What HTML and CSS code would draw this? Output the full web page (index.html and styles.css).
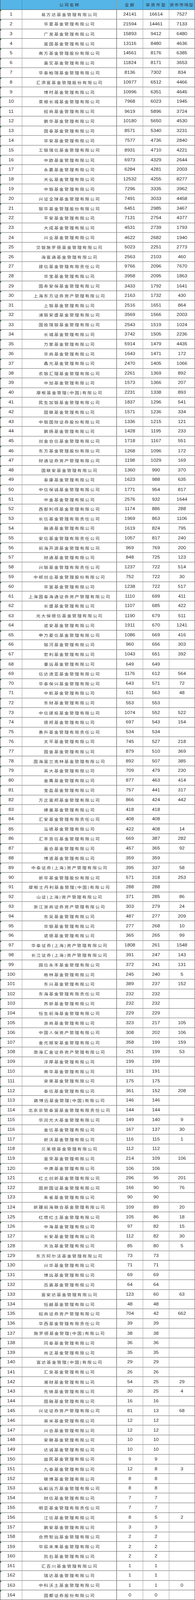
FILE: index.html
```html
<!DOCTYPE html>
<html lang="zh-CN">
<head>
<meta charset="utf-8">
<title>基金公司产品数量</title>
<link rel="stylesheet" href="styles.css">
</head>
<body>
<div class="frame">
<div class="sheet">
<div class="row head"><span class="no"></span><span class="name">公司名称</span><span class="n hd">全部</span><span class="n hd">非货币型</span><span class="n hd last">货币市场型</span></div>
<div class="row"><span class="no">1</span><span class="name">易方达基金管理有限公司</span><span class="n">24141</span><span class="n">16614</span><span class="n">7527</span></div>
<div class="row"><span class="no">2</span><span class="name">华夏基金管理有限公司</span><span class="n">21594</span><span class="n">14461</span><span class="n">7133</span></div>
<div class="row"><span class="no">3</span><span class="name">广发基金管理有限公司</span><span class="n">15893</span><span class="n">9412</span><span class="n">6480</span></div>
<div class="row"><span class="no">4</span><span class="name">富国基金管理有限公司</span><span class="n">13116</span><span class="n">8480</span><span class="n">4636</span></div>
<div class="row"><span class="no">5</span><span class="name">南方基金管理股份有限公司</span><span class="n">14561</span><span class="n">8176</span><span class="n">6385</span></div>
<div class="row"><span class="no">6</span><span class="name">嘉实基金管理有限公司</span><span class="n">11824</span><span class="n">8171</span><span class="n">3653</span></div>
<div class="row"><span class="no">7</span><span class="name">华泰柏瑞基金管理有限公司</span><span class="n">8136</span><span class="n">7302</span><span class="n">834</span></div>
<div class="row"><span class="no">8</span><span class="name">汇添富基金管理股份有限公司</span><span class="n">10977</span><span class="n">6512</span><span class="n">4466</span></div>
<div class="row"><span class="no">9</span><span class="name">博时基金管理有限公司</span><span class="n">10996</span><span class="n">6351</span><span class="n">4645</span></div>
<div class="row"><span class="no">10</span><span class="name">景顺长城基金管理有限公司</span><span class="n">7968</span><span class="n">6023</span><span class="n">1945</span></div>
<div class="row"><span class="no">11</span><span class="name">招商基金管理有限公司</span><span class="n">9619</span><span class="n">5896</span><span class="n">3724</span></div>
<div class="row"><span class="no">12</span><span class="name">鹏华基金管理有限公司</span><span class="n">10180</span><span class="n">5650</span><span class="n">4530</span></div>
<div class="row"><span class="no">13</span><span class="name">国泰基金管理有限公司</span><span class="n">8571</span><span class="n">5340</span><span class="n">3231</span></div>
<div class="row"><span class="no">14</span><span class="name">华安基金管理有限公司</span><span class="n">7577</span><span class="n">4736</span><span class="n">2840</span></div>
<div class="row"><span class="no">15</span><span class="name">工银瑞信基金管理有限公司</span><span class="n">8931</span><span class="n">4710</span><span class="n">4221</span></div>
<div class="row"><span class="no">16</span><span class="name">中欧基金管理有限公司</span><span class="n">6973</span><span class="n">4329</span><span class="n">2644</span></div>
<div class="row"><span class="no">17</span><span class="name">永赢基金管理有限公司</span><span class="n">6284</span><span class="n">4281</span><span class="n">2003</span></div>
<div class="row"><span class="no">18</span><span class="name">天弘基金管理有限公司</span><span class="n">12532</span><span class="n">4255</span><span class="n">8277</span></div>
<div class="row"><span class="no">19</span><span class="name">中银基金管理有限公司</span><span class="n">7296</span><span class="n">3335</span><span class="n">3962</span></div>
<div class="row"><span class="no">20</span><span class="name">兴证全球基金管理有限公司</span><span class="n">7491</span><span class="n">3033</span><span class="n">4458</span></div>
<div class="row"><span class="no">21</span><span class="name">银华基金管理股份有限公司</span><span class="n">6451</span><span class="n">2985</span><span class="n">3467</span></div>
<div class="row"><span class="no">22</span><span class="name">平安基金管理有限公司</span><span class="n">7131</span><span class="n">2754</span><span class="n">4377</span></div>
<div class="row"><span class="no">23</span><span class="name">大成基金管理有限公司</span><span class="n">4531</span><span class="n">2739</span><span class="n">1793</span></div>
<div class="row"><span class="no">24</span><span class="name">兴业基金管理有限公司</span><span class="n">4622</span><span class="n">2682</span><span class="n">1940</span></div>
<div class="row"><span class="no">25</span><span class="name">交银施罗德基金管理有限公司</span><span class="n">5023</span><span class="n">2251</span><span class="n">2773</span></div>
<div class="row"><span class="no">26</span><span class="name">海富通基金管理有限公司</span><span class="n">2563</span><span class="n">2103</span><span class="n">460</span></div>
<div class="row"><span class="no">27</span><span class="name">建信基金管理有限责任公司</span><span class="n">9766</span><span class="n">2096</span><span class="n">7670</span></div>
<div class="row"><span class="no">28</span><span class="name">华宝基金管理有限公司</span><span class="n">3958</span><span class="n">2095</span><span class="n">1863</span></div>
<div class="row"><span class="no">29</span><span class="name">国寿安保基金管理有限公司</span><span class="n">3433</span><span class="n">1792</span><span class="n">1641</span></div>
<div class="row"><span class="no">30</span><span class="name">上海东方证券资产管理有限公司</span><span class="n">2163</span><span class="n">1732</span><span class="n">430</span></div>
<div class="row"><span class="no">31</span><span class="name">上银基金管理有限公司</span><span class="n">2516</span><span class="n">1651</span><span class="n">864</span></div>
<div class="row"><span class="no">32</span><span class="name">浦银安盛基金管理有限公司</span><span class="n">3569</span><span class="n">1566</span><span class="n">2003</span></div>
<div class="row"><span class="no">33</span><span class="name">国投瑞银基金管理有限公司</span><span class="n">2543</span><span class="n">1519</span><span class="n">1024</span></div>
<div class="row"><span class="no">34</span><span class="name">长城基金管理有限公司</span><span class="n">3742</span><span class="n">1505</span><span class="n">2236</span></div>
<div class="row"><span class="no">35</span><span class="name">万家基金管理有限公司</span><span class="n">5914</span><span class="n">1479</span><span class="n">4435</span></div>
<div class="row"><span class="no">36</span><span class="name">华商基金管理有限公司</span><span class="n">1643</span><span class="n">1471</span><span class="n">172</span></div>
<div class="row"><span class="no">37</span><span class="name">鑫元基金管理有限公司</span><span class="n">2470</span><span class="n">1405</span><span class="n">1066</span></div>
<div class="row"><span class="no">38</span><span class="name">农银汇理基金管理有限公司</span><span class="n">2261</span><span class="n">1369</span><span class="n">892</span></div>
<div class="row"><span class="no">39</span><span class="name">中加基金管理有限公司</span><span class="n">1573</span><span class="n">1366</span><span class="n">207</span></div>
<div class="row"><span class="no">40</span><span class="name">摩根基金管理(中国)有限公司</span><span class="n">2231</span><span class="n">1338</span><span class="n">893</span></div>
<div class="row"><span class="no">41</span><span class="name">民生加银基金管理有限公司</span><span class="n">1837</span><span class="n">1296</span><span class="n">541</span></div>
<div class="row"><span class="no">42</span><span class="name">国联基金管理有限公司</span><span class="n">1571</span><span class="n">1236</span><span class="n">334</span></div>
<div class="row"><span class="no">43</span><span class="name">中银国际证券股份有限公司</span><span class="n">1336</span><span class="n">1215</span><span class="n">121</span></div>
<div class="row"><span class="no">44</span><span class="name">鹏扬基金管理有限公司</span><span class="n">1428</span><span class="n">1195</span><span class="n">233</span></div>
<div class="row"><span class="no">45</span><span class="name">创金合信基金管理有限公司</span><span class="n">1718</span><span class="n">1167</span><span class="n">551</span></div>
<div class="row"><span class="no">46</span><span class="name">东方基金管理股份有限公司</span><span class="n">1268</span><span class="n">1096</span><span class="n">172</span></div>
<div class="row"><span class="no">47</span><span class="name">财通证券资产管理有限公司</span><span class="n">1198</span><span class="n">1029</span><span class="n">169</span></div>
<div class="row"><span class="no">48</span><span class="name">国联安基金管理有限公司</span><span class="n">1360</span><span class="n">990</span><span class="n">370</span></div>
<div class="row"><span class="no">49</span><span class="name">泰康基金管理有限公司</span><span class="n">1623</span><span class="n">988</span><span class="n">635</span></div>
<div class="row"><span class="no">50</span><span class="name">中信保诚基金管理有限公司</span><span class="n">1771</span><span class="n">954</span><span class="n">817</span></div>
<div class="row"><span class="no">51</span><span class="name">中金基金管理有限公司</span><span class="n">2576</span><span class="n">932</span><span class="n">1644</span></div>
<div class="row"><span class="no">52</span><span class="name">西部利得基金管理有限公司</span><span class="n">1174</span><span class="n">886</span><span class="n">288</span></div>
<div class="row"><span class="no">53</span><span class="name">长信基金管理有限责任公司</span><span class="n">1969</span><span class="n">863</span><span class="n">1106</span></div>
<div class="row"><span class="no">54</span><span class="name">融通基金管理有限公司</span><span class="n">1619</span><span class="n">824</span><span class="n">795</span></div>
<div class="row"><span class="no">55</span><span class="name">安信基金管理有限责任公司</span><span class="n">1057</span><span class="n">817</span><span class="n">240</span></div>
<div class="row"><span class="no">56</span><span class="name">前海开源基金管理有限公司</span><span class="n">969</span><span class="n">769</span><span class="n">200</span></div>
<div class="row"><span class="no">57</span><span class="name">财通基金管理有限公司</span><span class="n">848</span><span class="n">725</span><span class="n">123</span></div>
<div class="row"><span class="no">58</span><span class="name">兴银基金管理有限责任公司</span><span class="n">1237</span><span class="n">722</span><span class="n">514</span></div>
<div class="row"><span class="no">59</span><span class="name">中邮创业基金管理股份有限公司</span><span class="n">752</span><span class="n">722</span><span class="n">30</span></div>
<div class="row"><span class="no">60</span><span class="name">华富基金管理有限公司</span><span class="n">1238</span><span class="n">722</span><span class="n">517</span></div>
<div class="row"><span class="no">61</span><span class="name">上海国泰海通证券资产管理有限公司</span><span class="n">1110</span><span class="n">699</span><span class="n">411</span></div>
<div class="row"><span class="no">62</span><span class="name">长盛基金管理有限公司</span><span class="n">1107</span><span class="n">685</span><span class="n">422</span></div>
<div class="row"><span class="no">63</span><span class="name">光大保德信基金管理有限公司</span><span class="n">1190</span><span class="n">679</span><span class="n">511</span></div>
<div class="row"><span class="no">64</span><span class="name">诺安基金管理有限公司</span><span class="n">1911</span><span class="n">670</span><span class="n">1241</span></div>
<div class="row"><span class="no">65</span><span class="name">申万菱信基金管理有限公司</span><span class="n">1086</span><span class="n">669</span><span class="n">416</span></div>
<div class="row"><span class="no">66</span><span class="name">银河基金管理有限公司</span><span class="n">960</span><span class="n">656</span><span class="n">303</span></div>
<div class="row"><span class="no">67</span><span class="name">宏利基金管理有限公司</span><span class="n">1043</span><span class="n">651</span><span class="n">392</span></div>
<div class="row"><span class="no">68</span><span class="name">睿远基金管理有限公司</span><span class="n">649</span><span class="n">649</span><span class="n"></span></div>
<div class="row"><span class="no">69</span><span class="name">信达澳亚基金管理有限公司</span><span class="n">1176</span><span class="n">612</span><span class="n">564</span></div>
<div class="row"><span class="no">70</span><span class="name">华泰保兴基金管理有限公司</span><span class="n">643</span><span class="n">571</span><span class="n">72</span></div>
<div class="row"><span class="no">71</span><span class="name">中航基金管理有限公司</span><span class="n">611</span><span class="n">563</span><span class="n">48</span></div>
<div class="row"><span class="no">72</span><span class="name">东财基金管理有限公司</span><span class="n">553</span><span class="n">553</span><span class="n"></span></div>
<div class="row"><span class="no">73</span><span class="name">中信建投基金管理有限公司</span><span class="n">1074</span><span class="n">552</span><span class="n">522</span></div>
<div class="row"><span class="no">74</span><span class="name">德邦基金管理有限公司</span><span class="n">697</span><span class="n">543</span><span class="n">154</span></div>
<div class="row"><span class="no">75</span><span class="name">惠升基金管理有限责任公司</span><span class="n">534</span><span class="n">534</span><span class="n"></span></div>
<div class="row"><span class="no">76</span><span class="name">太平基金管理有限公司</span><span class="n">745</span><span class="n">527</span><span class="n">218</span></div>
<div class="row"><span class="no">77</span><span class="name">国金基金管理有限公司</span><span class="n">879</span><span class="n">510</span><span class="n">369</span></div>
<div class="row"><span class="no">78</span><span class="name">国海富兰克林基金管理有限公司</span><span class="n">892</span><span class="n">507</span><span class="n">385</span></div>
<div class="row"><span class="no">79</span><span class="name">英大基金管理有限公司</span><span class="n">709</span><span class="n">479</span><span class="n">230</span></div>
<div class="row"><span class="no">80</span><span class="name">金鹰基金管理有限公司</span><span class="n">877</span><span class="n">463</span><span class="n">414</span></div>
<div class="row"><span class="no">81</span><span class="name">宝盈基金管理有限公司</span><span class="n">757</span><span class="n">441</span><span class="n">317</span></div>
<div class="row"><span class="no">82</span><span class="name">方正富邦基金管理有限公司</span><span class="n">866</span><span class="n">424</span><span class="n">442</span></div>
<div class="row"><span class="no">83</span><span class="name">蜂巢基金管理有限公司</span><span class="n">418</span><span class="n">418</span><span class="n"></span></div>
<div class="row"><span class="no">84</span><span class="name">汇安基金管理有限责任公司</span><span class="n">408</span><span class="n">408</span><span class="n"></span></div>
<div class="row"><span class="no">85</span><span class="name">泓德基金管理有限公司</span><span class="n">422</span><span class="n">408</span><span class="n">14</span></div>
<div class="row"><span class="no">86</span><span class="name">汇丰晋信基金管理有限公司</span><span class="n">669</span><span class="n">387</span><span class="n">282</span></div>
<div class="row"><span class="no">87</span><span class="name">嘉合基金管理有限公司</span><span class="n">457</span><span class="n">365</span><span class="n">92</span></div>
<div class="row"><span class="no">88</span><span class="name">博道基金管理有限公司</span><span class="n">359</span><span class="n">359</span><span class="n"></span></div>
<div class="row"><span class="no">89</span><span class="name">中泰证券(上海)资产管理有限公司</span><span class="n">395</span><span class="n">337</span><span class="n">58</span></div>
<div class="row"><span class="no">90</span><span class="name">新华基金管理股份有限公司</span><span class="n">571</span><span class="n">318</span><span class="n">253</span></div>
<div class="row"><span class="no">91</span><span class="name">摩根士丹利基金管理(中国)有限公司</span><span class="n">288</span><span class="n">288</span><span class="n"></span></div>
<div class="row"><span class="no">92</span><span class="name">山证(上海)资产管理有限公司</span><span class="n">371</span><span class="n">285</span><span class="n">86</span></div>
<div class="row"><span class="no">93</span><span class="name">浙江浙商证券资产管理有限公司</span><span class="n">303</span><span class="n">279</span><span class="n">24</span></div>
<div class="row"><span class="no">94</span><span class="name">东吴基金管理有限公司</span><span class="n">487</span><span class="n">277</span><span class="n">209</span></div>
<div class="row"><span class="no">95</span><span class="name">华银基金管理有限公司</span><span class="n">277</span><span class="n">268</span><span class="n">10</span></div>
<div class="row"><span class="no">96</span><span class="name">诺德基金管理有限公司</span><span class="n">365</span><span class="n">265</span><span class="n">99</span></div>
<div class="row"><span class="no">97</span><span class="name">华泰证券(上海)资产管理有限公司</span><span class="n">1808</span><span class="n">261</span><span class="n">1548</span></div>
<div class="row"><span class="no">98</span><span class="name">长江证券(上海)资产管理有限公司</span><span class="n">391</span><span class="n">247</span><span class="n">143</span></div>
<div class="row"><span class="no">99</span><span class="name">圆信永丰基金管理有限公司</span><span class="n">372</span><span class="n">241</span><span class="n">131</span></div>
<div class="row"><span class="no">100</span><span class="name">格林基金管理有限公司</span><span class="n">245</span><span class="n">240</span><span class="n">5</span></div>
<div class="row"><span class="no">101</span><span class="name">东兴基金管理有限公司</span><span class="n">389</span><span class="n">237</span><span class="n">152</span></div>
<div class="row"><span class="no">102</span><span class="name">东海基金管理有限责任公司</span><span class="n">232</span><span class="n">232</span><span class="n"></span></div>
<div class="row"><span class="no">103</span><span class="name">苏新基金管理有限公司</span><span class="n">232</span><span class="n">232</span><span class="n"></span></div>
<div class="row"><span class="no">104</span><span class="name">恒生前海基金管理有限公司</span><span class="n">229</span><span class="n">229</span><span class="n"></span></div>
<div class="row"><span class="no">105</span><span class="name">浙商基金管理有限公司</span><span class="n">323</span><span class="n">217</span><span class="n">105</span></div>
<div class="row"><span class="no">106</span><span class="name">中国人保资产管理有限公司</span><span class="n">308</span><span class="n">202</span><span class="n">106</span></div>
<div class="row"><span class="no">107</span><span class="name">金元顺安基金管理有限公司</span><span class="n">358</span><span class="n">199</span><span class="n">159</span></div>
<div class="row"><span class="no">108</span><span class="name">渤海汇金证券资产管理有限公司</span><span class="n">251</span><span class="n">199</span><span class="n">53</span></div>
<div class="row"><span class="no">109</span><span class="name">淳厚基金管理有限公司</span><span class="n">199</span><span class="n">199</span><span class="n"></span></div>
<div class="row"><span class="no">110</span><span class="name">南华基金管理有限公司</span><span class="n">191</span><span class="n">191</span><span class="n"></span></div>
<div class="row"><span class="no">111</span><span class="name">泉果基金管理有限公司</span><span class="n">175</span><span class="n">175</span><span class="n"></span></div>
<div class="row"><span class="no">112</span><span class="name">泰信基金管理有限公司</span><span class="n">361</span><span class="n">152</span><span class="n">208</span></div>
<div class="row"><span class="no">113</span><span class="name">路博迈基金管理(中国)有限公司</span><span class="n">146</span><span class="n">146</span><span class="n"></span></div>
<div class="row"><span class="no">114</span><span class="name">北京京管泰富基金管理有限责任公司</span><span class="n">144</span><span class="n">144</span><span class="n"></span></div>
<div class="row"><span class="no">115</span><span class="name">华润元大基金管理有限公司</span><span class="n">149</span><span class="n">140</span><span class="n">9</span></div>
<div class="row"><span class="no">116</span><span class="name">金信基金管理有限公司</span><span class="n">167</span><span class="n">137</span><span class="n">30</span></div>
<div class="row"><span class="no">117</span><span class="name">新沃基金管理有限公司</span><span class="n">116</span><span class="n">115</span><span class="n">1</span></div>
<div class="row"><span class="no">118</span><span class="name">贝莱德基金管理有限公司</span><span class="n">112</span><span class="n">112</span><span class="n"></span></div>
<div class="row"><span class="no">119</span><span class="name">富荣基金管理有限公司</span><span class="n">214</span><span class="n">109</span><span class="n">106</span></div>
<div class="row"><span class="no">120</span><span class="name">中庚基金管理有限公司</span><span class="n">106</span><span class="n">106</span><span class="n"></span></div>
<div class="row"><span class="no">121</span><span class="name">红土创新基金管理有限公司</span><span class="n">296</span><span class="n">95</span><span class="n">201</span></div>
<div class="row"><span class="no">122</span><span class="name">国新国证基金管理有限公司</span><span class="n">166</span><span class="n">90</span><span class="n">76</span></div>
<div class="row"><span class="no">123</span><span class="name">朱雀基金管理有限公司</span><span class="n">90</span><span class="n">90</span><span class="n"></span></div>
<div class="row"><span class="no">124</span><span class="name">新疆前海联合基金管理有限公司</span><span class="n">109</span><span class="n">89</span><span class="n">20</span></div>
<div class="row"><span class="no">125</span><span class="name">红塔红土基金管理有限公司</span><span class="n">105</span><span class="n">86</span><span class="n">18</span></div>
<div class="row"><span class="no">126</span><span class="name">中海基金管理有限公司</span><span class="n">97</span><span class="n">82</span><span class="n">15</span></div>
<div class="row"><span class="no">127</span><span class="name">长安基金管理有限公司</span><span class="n">112</span><span class="n">82</span><span class="n">30</span></div>
<div class="row"><span class="no">128</span><span class="name">天治基金管理有限公司</span><span class="n">85</span><span class="n">80</span><span class="n">5</span></div>
<div class="row"><span class="no">129</span><span class="name">东方阿尔法基金管理有限公司</span><span class="n">73</span><span class="n">73</span><span class="n"></span></div>
<div class="row"><span class="no">130</span><span class="name">兴华基金管理有限公司</span><span class="n">71</span><span class="n">71</span><span class="n"></span></div>
<div class="row"><span class="no">131</span><span class="name">博远基金管理有限公司</span><span class="n">69</span><span class="n">69</span><span class="n"></span></div>
<div class="row"><span class="no">132</span><span class="name">百嘉基金管理有限公司</span><span class="n">64</span><span class="n">64</span><span class="n"></span></div>
<div class="row"><span class="no">133</span><span class="name">富安达基金管理有限公司</span><span class="n">123</span><span class="n">60</span><span class="n">63</span></div>
<div class="row"><span class="no">134</span><span class="name">恒越基金管理有限公司</span><span class="n">48</span><span class="n">48</span><span class="n"></span></div>
<div class="row"><span class="no">135</span><span class="name">招商证券资产管理有限公司</span><span class="n">704</span><span class="n">42</span><span class="n">662</span></div>
<div class="row"><span class="no">136</span><span class="name">华西基金管理有限责任公司</span><span class="n">39</span><span class="n">39</span><span class="n"></span></div>
<div class="row"><span class="no">137</span><span class="name">施罗德基金管理(中国)有限公司</span><span class="n">38</span><span class="n">38</span><span class="n"></span></div>
<div class="row"><span class="no">138</span><span class="name">同泰基金管理有限公司</span><span class="n">36</span><span class="n">36</span><span class="n"></span></div>
<div class="row"><span class="no">139</span><span class="name">尚正基金管理有限公司</span><span class="n">35</span><span class="n">35</span><span class="n"></span></div>
<div class="row"><span class="no">140</span><span class="name">富达基金管理(中国)有限公司</span><span class="n">29</span><span class="n">29</span><span class="n"></span></div>
<div class="row"><span class="no">141</span><span class="name">汇泉基金管理有限公司</span><span class="n">26</span><span class="n">26</span><span class="n"></span></div>
<div class="row"><span class="no">142</span><span class="name">湘财基金管理有限公司</span><span class="n">54</span><span class="n">25</span><span class="n">29</span></div>
<div class="row"><span class="no">143</span><span class="name">先锋基金管理有限公司</span><span class="n">30</span><span class="n">25</span><span class="n">4</span></div>
<div class="row"><span class="no">144</span><span class="name">国融基金管理有限公司</span><span class="n">16</span><span class="n">16</span><span class="n"></span></div>
<div class="row"><span class="no">145</span><span class="name">兴证证券资产管理有限公司</span><span class="n">81</span><span class="n">13</span><span class="n">68</span></div>
<div class="row"><span class="no">146</span><span class="name">易米基金管理有限公司</span><span class="n">12</span><span class="n">12</span><span class="n"></span></div>
<div class="row"><span class="no">147</span><span class="name">兴合基金管理有限公司</span><span class="n">12</span><span class="n">12</span><span class="n"></span></div>
<div class="row"><span class="no">148</span><span class="name">安联基金管理有限公司</span><span class="n">10</span><span class="n">10</span><span class="n"></span></div>
<div class="row"><span class="no">149</span><span class="name">达诚基金管理有限公司</span><span class="n">10</span><span class="n">10</span><span class="n"></span></div>
<div class="row"><span class="no">150</span><span class="name">益民基金管理有限公司</span><span class="n">9</span><span class="n">9</span><span class="n"></span></div>
<div class="row"><span class="no">151</span><span class="name">九泰基金管理有限公司</span><span class="n">12</span><span class="n">8</span><span class="n">3</span></div>
<div class="row"><span class="no">152</span><span class="name">联博基金管理有限公司</span><span class="n">8</span><span class="n">8</span><span class="n"></span></div>
<div class="row"><span class="no">153</span><span class="name">弘毅远方基金管理有限公司</span><span class="n">8</span><span class="n">8</span><span class="n"></span></div>
<div class="row"><span class="no">154</span><span class="name">财信基金管理有限公司</span><span class="n">7</span><span class="n">7</span><span class="n"></span></div>
<div class="row"><span class="no">155</span><span class="name">明亚基金管理有限责任公司</span><span class="n">7</span><span class="n">7</span><span class="n"></span></div>
<div class="row"><span class="no">156</span><span class="name">江信基金管理有限公司</span><span class="n">8</span><span class="n">5</span><span class="n">2</span></div>
<div class="row"><span class="no">157</span><span class="name">鹏安基金管理有限公司</span><span class="n">3</span><span class="n">3</span><span class="n"></span></div>
<div class="row"><span class="no">158</span><span class="name">合煦智远基金管理有限公司</span><span class="n">2</span><span class="n">2</span><span class="n"></span></div>
<div class="row"><span class="no">159</span><span class="name">华宸未来基金管理有限公司</span><span class="n">2</span><span class="n">2</span><span class="n"></span></div>
<div class="row"><span class="no">160</span><span class="name">凯石基金管理有限公司</span><span class="n">2</span><span class="n">2</span><span class="n"></span></div>
<div class="row"><span class="no">161</span><span class="name">汇百川基金管理有限公司</span><span class="n">1</span><span class="n">1</span><span class="n"></span></div>
<div class="row"><span class="no">162</span><span class="name">瑞达基金管理有限公司</span><span class="n">1</span><span class="n">1</span><span class="n"></span></div>
<div class="row"><span class="no">163</span><span class="name">中科沃土基金管理有限公司</span><span class="n">1</span><span class="n">1</span><span class="n">0</span></div>
<div class="row"><span class="no">164</span><span class="name">国都证券股份有限公司</span><span class="n">0</span><span class="n">0</span><span class="n"></span></div>
</div>
</div>
<script src="fit.js"></script>
</body>
</html>
```

FILE: styles.css
```css
html, body {
  margin: 0;
  padding: 0;
  background: #ffffff;
}

/* The browser window is capped in height; the sheet is drawn at its
   natural 4883px height and fitted into the window vertically. */
.frame {
  width: 500px;
  height: 100vh;
  overflow: hidden;
}

.sheet {
  --fit: 0.838828;
  width: 500px;
  box-sizing: border-box;
  border-left: 1px solid #4a4a4a;
  border-right: 1px solid #6a6a6a;
  font-family: "Liberation Sans", Arial, sans-serif;
  font-size: 12.3px;
  color: #1e1e1e;
  transform-origin: 0 0;
  transform: scaleY(var(--fit));
}

.row {
  display: grid;
  grid-template-columns: 56px 243px 67px 67px 65px;
  height: 29.594px;
  box-sizing: border-box;
  border-bottom: 1px solid #454545;
  position: relative;
}

.row::before {
  content: "";
  position: absolute;
  left: 0;
  top: 0;
  width: 2px;
  height: 4px;
  background: #2e7d32;
}

.row.head::before {
  display: none;
}

.row > span {
  display: flex;
  align-items: center;
  justify-content: center;
  box-sizing: border-box;
  border-right: 1px solid #a0a0a0;
  white-space: nowrap;
  overflow: hidden;
  line-height: 14px;
}

.row > .name {
  border-right: 2px solid #9a9a9a;
}

.row > span:last-child {
  border-right: none;
}

.name {
  font-family: "Noto Sans CJK SC", "Noto Sans CJK JP", sans-serif;
  font-size: 11px;
  letter-spacing: 2.2px;
  padding-left: 2px;
  color: #333333;
}

.head {
  background: #55b5e7;
}

.head > span {
  font-family: "Noto Sans CJK SC", "Noto Sans CJK JP", sans-serif;
  font-size: 11px;
  letter-spacing: 2.2px;
  color: #2a2a2a;
  border-right-color: #3f8fc0;
}

.head > .last {
  letter-spacing: 1.4px;
  justify-content: flex-start;
  padding-left: 1px;
}
```

FILE: fit.js
```js
(function () {
  var sheet = document.querySelector('.sheet');
  var natural = sheet.offsetHeight;
  var fit = Math.min(1, window.innerHeight / natural);
  sheet.style.setProperty('--fit', fit);
})();
```
